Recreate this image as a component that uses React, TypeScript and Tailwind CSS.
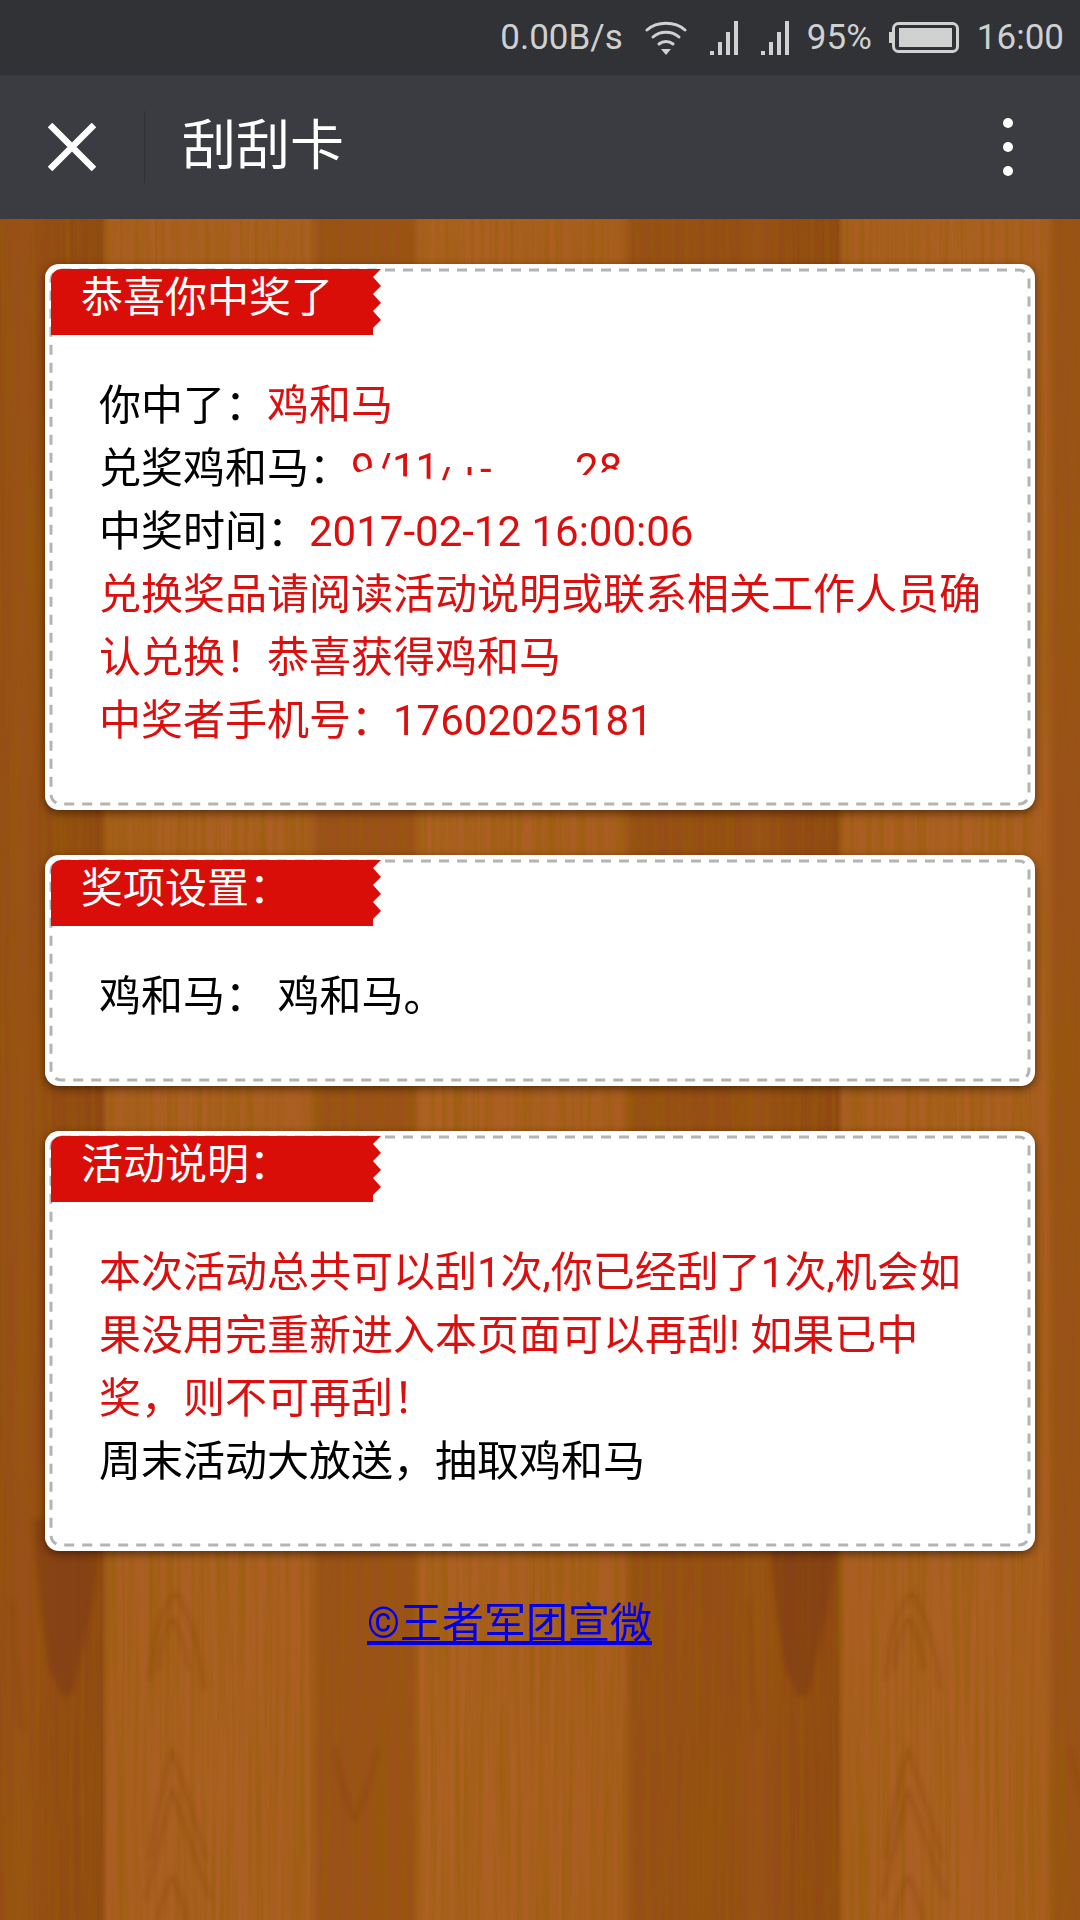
const cjk = "font-['Roboto','Noto_Sans_CJK_SC',sans-serif]";
const red = "text-[#dc0f0f]";

// one knot + grain set, drawn twice because the wood image repeats every 736px
function WoodMarks({ dx }: { dx: number }) {
  return (
    <g transform={`translate(${dx} 0)`}>
      <path d="M33 1300 C36 1360 44 1420 50 1450 L56 1462 L60 1474 L68 1478 L74 1470 L80 1440 C90 1400 98 1360 100 1300 Z" fill="#7a380d" opacity="0.5" />
      <g fill="none" stroke="#7f3d0f" strokeWidth="3" opacity="0.35">
        <path d="M150 1460 C152 1420 160 1390 176 1374 C190 1395 200 1430 204 1470" />
        <path d="M158 1450 C160 1430 165 1410 172 1400 C180 1412 186 1430 188 1450" />
        <path d="M150 1640 C156 1590 165 1560 172 1531 C180 1555 192 1590 206 1640" />
        <path d="M146 1680 C155 1640 165 1600 172 1571 C182 1600 196 1640 210 1680" />
        <path d="M158 1701 C162 1680 168 1665 172 1658 C178 1668 184 1685 186 1701" />
        <path d="M335 1530 C340 1560 348 1590 355 1600 C362 1585 372 1560 378 1530" />
        <path d="M12 1380 C14 1420 18 1490 22 1510" />
      </g>
    </g>
  );
}

function WoodBackground() {
  return (
    <svg className="absolute inset-0 h-full w-full" viewBox="0 0 1080 1701" preserveAspectRatio="none">
      <defs>
        <linearGradient id="plank" x1="0" x2="736" y1="0" y2="0" gradientUnits="userSpaceOnUse">
          <stop offset="0" stopColor="#954c16" />
          <stop offset="0.03" stopColor="#9a5019" />
          <stop offset="0.06" stopColor="#944b15" />
          <stop offset="0.138" stopColor="#8f4813" />
          <stop offset="0.146" stopColor="#aa5e22" />
          <stop offset="0.3" stopColor="#ac6024" />
          <stop offset="0.42" stopColor="#aa5e22" />
          <stop offset="0.435" stopColor="#9a5019" />
          <stop offset="0.56" stopColor="#9c5119" />
          <stop offset="0.572" stopColor="#ad6124" />
          <stop offset="0.845" stopColor="#a95d21" />
          <stop offset="0.86" stopColor="#974e17" />
          <stop offset="1" stopColor="#954c16" />
        </linearGradient>
        <pattern id="tile" width="736" height="1701" patternUnits="userSpaceOnUse">
          <rect width="736" height="1701" fill="url(#plank)" />
        </pattern>
        <filter id="grain" x="0" y="0" width="100%" height="100%">
          <feTurbulence type="fractalNoise" baseFrequency="0.2 0.004" numOctaves="3" seed="7" />
          <feColorMatrix values="0 0 0 0 0.3  0 0 0 0 0.11  0 0 0 0 0  0 0 0 1.2 -0.42" />
        </filter>
        <filter id="soft">
          <feGaussianBlur stdDeviation="2.2" />
        </filter>
      </defs>
      <rect width="1080" height="1701" fill="url(#tile)" />
      <rect width="1080" height="1701" filter="url(#grain)" />
      <g filter="url(#soft)">
        <WoodMarks dx={0} />
        <WoodMarks dx={736} />
      </g>
    </svg>
  );
}

function StatusBar() {
  return (
    <div className="flex h-[75px] items-center justify-end bg-[#303236] pr-[16px] font-['Roboto',sans-serif] text-[35px] leading-none text-[#cfd0d0]">
      <span>0.00B/s</span>
      <svg className="ml-[22px]" width="42" height="34" viewBox="0 0 42 34" fill="none" stroke="#d0d1d1" strokeWidth="3" strokeLinecap="round">
        <path d="M2 9 C12 0 30 0 40 9" />
        <path d="M8 16 C15 9.5 27 9.5 34 16" />
        <path d="M14 23 C18 19.5 24 19.5 28 23" />
        <path d="M16 28 L26 28 L21 34 Z" fill="#d0d1d1" stroke="none" />
      </svg>
      <div className="ml-[23px] flex gap-[23px]">
        {[0, 1].map((i) => (
          <svg key={i} width="28" height="34" viewBox="0 0 28 34" fill="#d0d1d1">
            <rect x="0" y="30" width="4" height="4" />
            <rect x="8" y="21" width="4" height="13" />
            <rect x="16" y="11" width="4" height="23" />
            <rect x="24" y="0" width="4" height="34" />
          </svg>
        ))}
      </div>
      <span className="ml-[18px]">95%</span>
      <svg className="ml-[17px]" width="70" height="31" viewBox="0 0 70 31">
        <rect x="0" y="10" width="3" height="11" fill="#d0d1d1" />
        <rect x="4.5" y="1.5" width="64" height="28" rx="5" fill="none" stroke="#d0d1d1" strokeWidth="3" />
        <rect x="10" y="6" width="53" height="19" fill="#d0d1d1" />
      </svg>
      <span className="ml-[18px]">16:00</span>
    </div>
  );
}

function NavBar() {
  return (
    <div className="flex h-[144px] items-center bg-[#3a3c41]">
      <svg className="ml-[48px]" width="48" height="48" viewBox="0 0 48 48" stroke="#fff" strokeWidth="6.5" fill="none">
        <path d="M2 2 L46 46 M46 2 L2 46" />
      </svg>
      <div className="ml-[48px] h-[72px] w-px bg-[#2f3135]" />
      <div className={`ml-[37px] text-[54px] leading-none text-white ${cjk}`}>刮刮卡</div>
      <div className="mr-[67px] ml-auto flex flex-col gap-[14px]">
        <div className="size-[10px] rounded-full bg-white" />
        <div className="size-[10px] rounded-full bg-white" />
        <div className="size-[10px] rounded-full bg-white" />
      </div>
    </div>
  );
}

function Card({ title, children }: { title: string; children: React.ReactNode }) {
  return (
    <section className="relative rounded-[14px] bg-white pt-[110px] pr-[46px] pb-[58px] pl-[54px] text-[42px] leading-[63px] text-black shadow-[0_3px_9px_rgba(40,15,0,0.6)]">
      <svg className="absolute top-[6px] left-[6px] h-[calc(100%-12px)] w-[calc(100%-12px)] overflow-visible">
        <rect x="0" y="0" width="100%" height="100%" rx="10" fill="none" stroke="#b4b4b4" strokeWidth="3" strokeDasharray="10 8" />
      </svg>
      <h2 className="absolute top-[5px] left-[6px] h-[66px] w-[330px] rounded-tl-[10px] bg-[#d90e08] pl-[30px] text-[42px] leading-[58px] font-normal text-white [clip-path:polygon(0_0,100%_0,322px_8px,100%_17px,322px_25px,100%_34px,322px_42px,100%_51px,322px_59px,322px_100%,0_100%)]">
        {title}
      </h2>
      <div className="relative">{children}</div>
    </section>
  );
}

export default function App() {
  return (
    <div className={`flex h-[1920px] w-[1080px] flex-col overflow-hidden ${cjk}`}>
      <StatusBar />
      <NavBar />
      <main className="relative flex-1 px-[45px] pt-[45px]">
        <WoodBackground />
        <div className="relative flex flex-col gap-[45px]">
          <Card title="恭喜你中奖了">
            <p>你中了：<span className={red}>鸡和马</span></p>
            <p className="relative">
              兑奖鸡和马：<span className={red}>9/11/1-&nbsp;&nbsp;&nbsp;&nbsp;&nbsp;&nbsp;&nbsp;&nbsp;28</span>
              {/* number is wiped out in the reference */}
              <span className="absolute top-0 left-[252px] h-[63px] w-[330px] bg-white [clip-path:polygon(0_38px,28px_28px,40px_38px,100px_44px,110px_38px,240px_38px,300px_25px,100%_25px,100%_100%,0_100%)]" />
              <span className="absolute top-0 left-[340px] h-[30px] w-[130px] bg-white" />
            </p>
            <p>中奖时间：<span className={red}>2017-02-12 16:00:06</span></p>
            <p className={red}>兑换奖品请阅读活动说明或联系相关工作人员确认兑换！恭喜获得鸡和马</p>
            <p className={red}>中奖者手机号：17602025181</p>
          </Card>
          <Card title="奖项设置：">
            <p>鸡和马：&nbsp;鸡和马。</p>
          </Card>
          <Card title="活动说明：">
            <p className={red}>本次活动总共可以刮1次,你已经刮了1次,机会如果没用完重新进入本页面可以再刮! 如果已中奖，则不可再刮！</p>
            <p>周末活动大放送，抽取鸡和马</p>
          </Card>
        </div>
        <div className="relative mt-[48px] pl-[322px]">
          <a href="#" className="text-[42px] leading-[50px] text-[#0000ee] underline">©王者军团宣微</a>
        </div>
      </main>
    </div>
  );
}
